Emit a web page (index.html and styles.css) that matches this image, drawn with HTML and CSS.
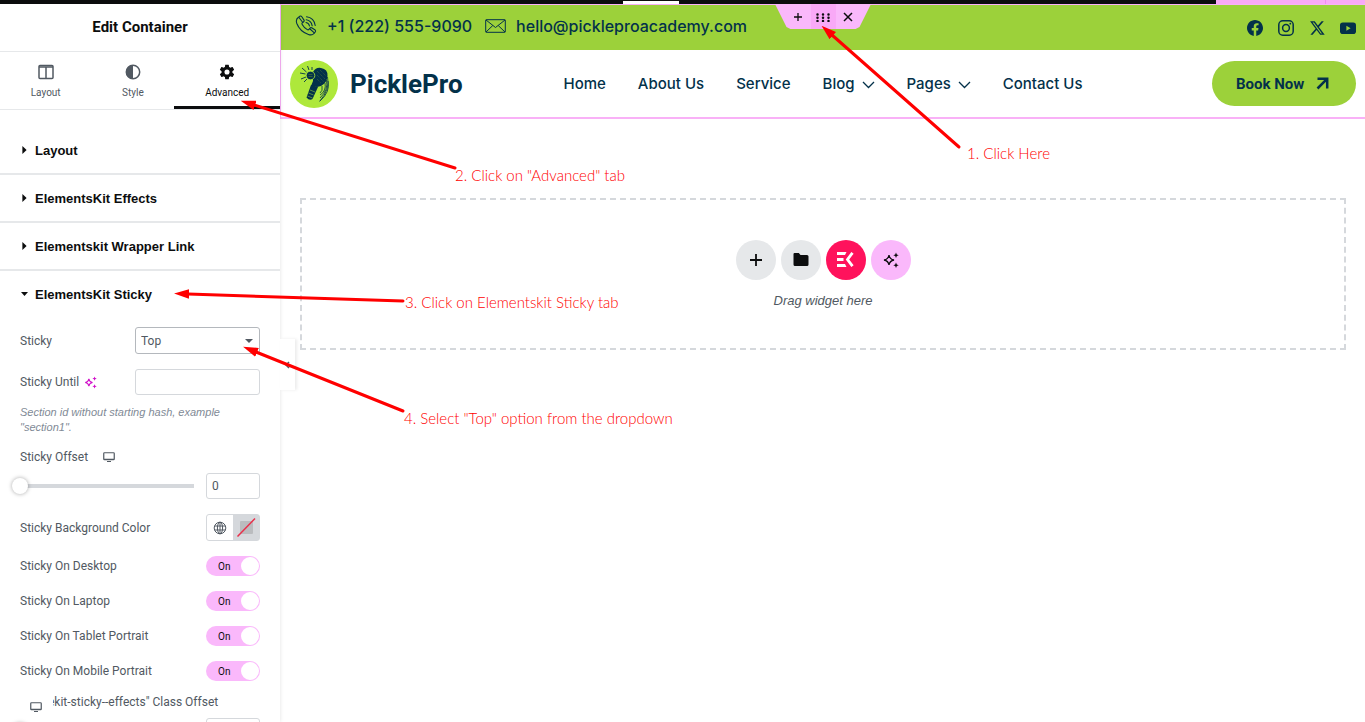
FILE: index.html
```
<!DOCTYPE html>
<html lang="en">
<head>
    <meta charset="UTF-8">
    <meta name="viewport" content="width=device-width, initial-scale=1.0">
    <title>Edit Container</title>
    <link rel="stylesheet" href="styles.css">
</head>
<body>
    <div class="top-strip">
        <span class="strip-tab"></span>
        <span class="strip-publish"></span>
    </div>

    <div class="editor">
        <aside class="panel">
            <h1 class="panel-title">Edit Container</h1>

            <nav class="tabs">
                <button type="button" class="tab">
                    <svg width="16" height="16" viewBox="0 0 16 16" fill="none" stroke="currentColor" stroke-width="1.5"><rect x="1" y="1.5" width="14" height="13" rx="1"/><path d="M1 3h14M8 3v11.500" /></svg>
                    Layout
                </button>
                <button type="button" class="tab">
                    <svg width="16" height="16" viewBox="0 0 16 16"><circle cx="8" cy="8" r="6.700" fill="none" stroke="currentColor" stroke-width="1.500"/><path d="M8 1a7 7 0 0 0 0 14z" fill="currentColor"/></svg>
                    Style
                </button>
                <button type="button" class="tab active">
                    <svg width="16" height="16" viewBox="1 1 22 22" fill="currentColor"><path d="M19.430 12.980c.04-.32.07-.64.07-.98s-.03-.66-.07-.98l2.110-1.650c.19-.15.24-.42.12-.64l-2-3.460c-.12-.22-.39-.3-.61-.22l-2.490 1c-.52-.4-1.080-.73-1.690-.98l-.38-2.650A.488.488 0 0 0 14 2h-4c-.25 0-.46.18-.49.42l-.38 2.650c-.61.25-1.170.59-1.690.98l-2.490-1c-.23-.09-.49 0-.61.22l-2 3.460c-.13.22-.07.49.12.64l2.110 1.650c-.04.32-.07.65-.07.98s.03.66.07.98l-2.110 1.650c-.19.15-.24.42-.12.64l2 3.460c.12.22.39.3.61.22l2.490-1c.52.4 1.080.73 1.690.98l.38 2.650c.03.24.24.42.49.42h4c.25 0 .46-.18.49-.42l.38-2.650c.61-.25 1.170-.59 1.690-.98l2.490 1c.23.09.49 0 .61-.22l2-3.460c.12-.22.07-.49-.12-.64l-2.110-1.650zM12 15.500a3.500 3.500 0 1 1 0-7 3.500 3.500 0 0 1 0 7z"/></svg>
                    Advanced
                </button>
            </nav>

            <div class="sections">
                <button type="button" class="section-head"><span class="caret"></span>Layout</button>
                <button type="button" class="section-head"><span class="caret"></span>ElementsKit Effects</button>
                <button type="button" class="section-head"><span class="caret"></span>Elementskit Wrapper Link</button>
                <button type="button" class="section-head"><span class="caret open"></span>ElementsKit Sticky</button>
            </div>

            <div class="controls">
                <div class="control">
                    <label for="sticky">Sticky</label>
                    <div class="select-wrap">
                        <select id="sticky">
                            <option>None</option>
                            <option selected>Top</option>
                            <option>Bottom</option>
                        </select>
                    </div>
                </div>
                <div class="control">
                    <label for="until">Sticky Until
                        <svg class="ai" width="13" height="13" viewBox="0 0 16 16"><path d="M6 3.500Q6.600 7.400 10.500 8Q6.600 8.600 6 12.500Q5.400 8.600 1.500 8Q5.400 7.400 6 3.500z" fill="none" stroke="currentColor" stroke-width="1.300"/><path d="M13 .5l.8 1.900 1.900.8-1.900.8-.8 1.900-.8-1.900-1.900-.8 1.900-.8zM13 10l.8 1.900 1.900.8-1.900.8-.8 1.900-.8-1.900-1.900-.8 1.900-.8z" fill="currentColor"/></svg>
                    </label>
                    <input type="text" id="until" class="wide-input">
                </div>
                <p class="note">Section id without starting hash, example "section1".</p>

                <div class="control offset-label">
                    <label for="offset">Sticky Offset</label>
                    <svg class="device" width="12" height="10" viewBox="0 0 12 10"><rect x=".75" y=".75" width="10.500" height="7" rx=".7" fill="none" stroke="currentColor" stroke-width="1.200"/><path d="M1 6.700h10v1.200H1zM4 9h4v1H4z" fill="currentColor"/></svg>
                </div>
                <div class="control slider-row">
                    <input type="range" id="offset" class="slider" min="0" max="100" value="0">
                    <input type="text" class="num-input" value="0" aria-label="Offset value">
                </div>

                <div class="control color-row">
                    <span>Sticky Background Color</span>
                    <div class="color-picker">
                        <button type="button" aria-label="Global color">
                            <svg width="14" height="14" viewBox="0 0 14 14" fill="none" stroke="currentColor"><circle cx="7" cy="7" r="5.800"/><ellipse cx="7" cy="7" rx="2.600" ry="5.800"/><path d="M1.700 5h10.600M1.700 9h10.600M7 1v12"/></svg>
                        </button>
                        <button type="button" class="swatch" aria-label="Pick color">
                            <svg width="26" height="25" viewBox="0 0 26 25"><rect x="7" y="6" width="13" height="13" rx="1" fill="#babcbf"/><path d="M4.500 21.500L22 3.500" stroke="#e9304b" stroke-width="1.500"/></svg>
                        </button>
                    </div>
                </div>

                <label class="control switch-row">Sticky On Desktop
                    <input type="checkbox" class="switch" checked><span class="switch-track">On</span>
                </label>
                <label class="control switch-row">Sticky On Laptop
                    <input type="checkbox" class="switch" checked><span class="switch-track">On</span>
                </label>
                <label class="control switch-row">Sticky On Tablet Portrait
                    <input type="checkbox" class="switch" checked><span class="switch-track">On</span>
                </label>
                <label class="control switch-row">Sticky On Mobile Portrait
                    <input type="checkbox" class="switch" checked><span class="switch-track">On</span>
                </label>

                <div class="class-offset">
                    <label for="classOffset">".ekit-sticky--effects" Class Offset</label>
                    <span class="device-cover">
                        <svg class="device" width="12" height="10" viewBox="0 0 12 10"><rect x=".75" y=".75" width="10.500" height="7" rx=".7" fill="none" stroke="currentColor" stroke-width="1.200"/><path d="M1 6.700h10v1.200H1zM4 9h4v1H4z" fill="currentColor"/></svg>
                    </span>
                </div>
                <div class="control slider-row">
                    <input type="range" class="slider" min="0" max="100" value="0" aria-label="Class offset">
                    <input type="text" id="classOffset" class="num-input">
                </div>
            </div>

            <button type="button" class="collapse" aria-label="Hide panel">
                <svg width="5" height="8" viewBox="0 0 5 8" fill="none" stroke="#515962" stroke-width="1.500"><path d="M4 1L1 4l3 3"/></svg>
            </button>
        </aside>

        <main class="preview">
            <header class="site-header">
                <div class="info-bar">
                    <a href="#" class="contact phone">
                        <svg width="22" height="22" viewBox="0 0 22 22" fill="none" stroke="currentColor" stroke-width="1.100" stroke-linejoin="round" stroke-linecap="round"><path d="M3.500 2.200L5 1.100Q6.200.8 7 2l2 3.100q.5 1-.4 1.700L7.200 7.900q-.5.600 0 1.500 1.900 3.300 5.100 5.200.8.500 1.500-.1l1.200-1.400q.7-.9 1.700-.3l3.100 2q1.200.8.500 2l-1.400 1.700q-1.800 2.200-5.500.9Q4.900 16.500 1.700 8.200.5 4.200 3.500 2.200z"/><path d="M4 2.500l3.800 5M15 14l4.300 3.800M11 7.500q2.900.6 3.500 3.500M11.200 4.800q4.900.6 6 6M11.500 1.800q7.500.8 8.700 8.700"/></svg>
                        +1 (222) 555-9090
                    </a>
                    <a href="#" class="contact">
                        <svg width="21" height="14" viewBox="0 0 21 14" fill="none" stroke="currentColor" stroke-width="1"><rect x=".7" y=".7" width="19.600" height="12.600" rx=".5"/><path d="M1 1l9.500 7.500L20 1M1 13l6.800-6.500M20 13l-6.800-6.500"/></svg>
                        hello@pickleproacademy.com
                    </a>
                    <div class="socials">
                        <a href="#" aria-label="Facebook"><svg width="16" height="16" viewBox="0 0 16 16" fill="currentColor"><path d="M16 8.050C16 3.600 12.420 0 8 0S0 3.600 0 8.050c0 4.020 2.930 7.350 6.750 7.950v-5.620H4.720V8.050h2.030V6.280c0-2.020 1.190-3.130 3.020-3.130.88 0 1.790.16 1.790.16v1.980h-1.010c-.99 0-1.300.62-1.300 1.260v1.500h2.220l-.36 2.330H9.250V16C13.070 15.400 16 12.070 16 8.050z"/></svg></a>
                        <a href="#" aria-label="Instagram"><svg width="16" height="16" viewBox="0 0 16 16" fill="none" stroke="currentColor" stroke-width="1.500"><rect x=".8" y=".8" width="14.400" height="14.400" rx="4"/><circle cx="8" cy="8" r="3.400"/><circle cx="12.300" cy="3.700" r=".9" fill="currentColor" stroke="none"/></svg></a>
                        <a href="#" aria-label="X"><svg width="16" height="16" viewBox="0 0 16 16" fill="currentColor"><path d="M12.600 1.200h2.200l-4.900 5.700 5.800 7.900h-4.500L7.600 10l-4 4.800H1.400l5.200-6.100L1.100 1.200h4.600l3.200 4.400zm-.8 12.200H13L4.900 2.500H3.600z"/></svg></a>
                        <a href="#" aria-label="YouTube"><svg width="16" height="16" viewBox="0 0 16 16"><rect y="2.500" width="16" height="11.500" rx="2.800" fill="currentColor"/><path d="M6.400 5.700v5l4.200-2.500z" fill="#9cd13a"/></svg></a>
                    </div>
                </div>

                <div class="nav-bar">
                    <a href="#" class="logo">
                        <svg width="48" height="48" viewBox="0 0 48 48"><circle cx="24" cy="24" r="24" fill="#aee83b"/><g fill="#03314a"><path d="M23 12Q26 7 31 8q7 1 6.500 8Q37 23 31 26l-4 1-6-1 2-5z"/><path d="M21 25l7 2-5.500 12q-3 2-6-1.500z"/></g><g fill="none" stroke="#03314a" stroke-width=".9"><path d="M15.500 14L10 13M16 17l-5 2M16.500 12L12 8M19 10l-1.500-4M22 10V7M17 19l-3 3"/><path stroke-width=".8" d="M37.500 17q3 12-8 24.500M36.500 20q2 10-6.500 18M35 23q1.500 8-5 12M38 21q2.500 11-8 20M32 26q1 5-2 7"/></g><g stroke="#aee83b" stroke-width=".5" fill="none"><circle cx="20.500" cy="15.500" r="4.300" fill="#03314a" stroke-width=".8"/><path d="M18.500 14.500h4M18.500 16.500h4" stroke="#63902f"/><path d="M27 11l8 8M30 10l6 6M27 15l7 7M27 19l4 4" stroke="#63902f" stroke-dasharray="1 1"/><path d="M20 30l5 2M18.500 33l5 2M17.500 36l5 2"/></g></svg>
                        <span>PicklePro</span>
                    </a>
                    <nav class="menu">
                        <a href="#">Home</a>
                        <a href="#">About Us</a>
                        <a href="#">Service</a>
                        <a href="#">Blog <svg class="chev" width="13" height="8" viewBox="0 0 13 8"><path d="M1 1l5.500 5.500L12 1"/></svg></a>
                        <a href="#">Pages <svg class="chev" width="13" height="8" viewBox="0 0 13 8"><path d="M1 1l5.500 5.500L12 1"/></svg></a>
                        <a href="#">Contact Us</a>
                    </nav>
                    <a href="#" class="book">Book Now
                        <svg width="13" height="13" viewBox="0 0 13 13" fill="none" stroke="currentColor" stroke-width="2.500"><path d="M1.500 1.800h9.700v9.700M10.800 2.200L1.500 11.500"/></svg>
                    </a>
                </div>

                <div class="handle">
                    <button type="button" aria-label="Add container"><svg width="10" height="10" viewBox="0 0 10 10" stroke="currentColor" stroke-width="1.300"><path d="M5 1v8M1 5h8"/></svg></button>
                    <button type="button" class="drag" aria-label="Edit container"><svg width="14" height="9" viewBox="0 0 14 9" stroke="currentColor" stroke-width="2.500" stroke-linecap="round"><path d="M1.500 1.500h.01M7 1.500h.01M12.500 1.500h.01M1.500 4.700h.01M7 4.700h.01M12.500 4.700h.01M1.500 7.900h.01M7 7.900h.01M12.500 7.900h.01"/></svg></button>
                    <button type="button" aria-label="Delete container"><svg width="10" height="10" viewBox="0 0 10 10" stroke="currentColor" stroke-width="1.500"><path d="M1 1l8 8M9 1L1 9"/></svg></button>
                </div>
            </header>

            <section class="drop-area">
                <div class="drop-buttons">
                    <button type="button" aria-label="Add element"><svg width="14" height="14" viewBox="0 0 14 14" stroke="currentColor" stroke-width="1.800"><path d="M7 1v12M1 7h12"/></svg></button>
                    <button type="button" aria-label="Template library"><svg width="16" height="14" viewBox="0 0 16 14" fill="currentColor"><path d="M1.500 0h4.300l1.700 2h6.500q1.500 0 1.500 1.500v8q0 1.500-1.500 1.500H2Q.5 13 .5 11.500V1.200Q.5 0 1.500 0z"/></svg></button>
                    <button type="button" class="kit" aria-label="ElementsKit library"><svg width="17" height="15" viewBox="0 0 17 15"><path d="M0 0h9.500L8 3H0zM0 6h6.500v3H0zM0 12h8l1.500 3H0z" fill="currentColor"/><path d="M15.500.8L10.500 7.500l5 6.700" fill="none" stroke="currentColor" stroke-width="2.800"/></svg></button>
                    <button type="button" class="spark" aria-label="Build with AI"><svg width="16" height="16" viewBox="0 0 16 16"><path d="M6 3Q6.700 7.300 11 8Q6.700 8.700 6 13Q5.300 8.700 1 8Q5.300 7.300 6 3z" fill="none" stroke="currentColor" stroke-width="1.300"/><path d="M13 .5l.8 1.900 1.900.8-1.900.8-.8 1.900-.8-1.900-1.900-.8 1.900-.8zM13 10.500l.8 1.900 1.900.8-1.900.8-.8 1.900-.8-1.900-1.900-.8 1.900-.8z" fill="currentColor"/></svg></button>
                </div>
                <p>Drag widget here</p>
            </section>
        </main>
    </div>

    <!-- tutorial arrows and steps -->
    <svg class="arrows" width="1000" height="440" viewBox="0 0 1000 440">
        <defs>
            <marker id="head" viewBox="0 0 14 9" refX="1" refY="4.500" markerWidth="15" markerHeight="10" markerUnits="userSpaceOnUse" orient="auto"><path d="M0 0l14 4.500L0 9z" fill="#f00"/></marker>
        </defs>
        <g stroke="#f00" stroke-width="3" stroke-linecap="round">
            <line x1="959" y1="147" x2="832" y2="35" marker-end="url(#head)"/>
            <line x1="455" y1="168" x2="254" y2="105" marker-end="url(#head)"/>
            <line x1="403" y1="301" x2="188" y2="294" marker-end="url(#head)"/>
            <line x1="403" y1="411" x2="256" y2="352" marker-end="url(#head)"/>
        </g>
    </svg>
    <p class="step step-1">1. Click Here</p>
    <p class="step step-2">2. Click on "Advanced" tab</p>
    <p class="step step-3">3. Click on Elementskit Sticky tab</p>
    <p class="step step-4">4. Select "Top" option from the dropdown</p>
</body>
</html>
```
FILE: styles.css
```
* {
    box-sizing: border-box;
}
body {
    margin: 0;
    height: 100vh;
    overflow: hidden;
    position: relative;
    display: flex;
    flex-direction: column;
    background: #fff;
    font-family: Roboto, sans-serif;
}
button {
    border: none;
    background: none;
    padding: 0;
    font-family: inherit;
    color: inherit;
    cursor: pointer;
}
a {
    color: inherit;
    text-decoration: none;
}
svg {
    flex-shrink: 0;
}

/* top strip */
.top-strip {
    flex: none;
    height: 4px;
    background: #0c0d0e;
    display: flex;
    justify-content: space-between;
    align-items: flex-end;
}
.strip-tab {
    width: 56px;
    height: 3px;
    margin-left: 623px;
    background: #fff;
}
.strip-publish {
    width: 149px;
    height: 4px;
    background: linear-gradient(90deg, #f9a9f7 109px, #f08cee 109px, #f08cee 110px, #f9a9f7 110px);
}
.editor {
    flex: 1;
    min-height: 0;
    display: flex;
}

/* panel */
.panel {
    position: relative;
    z-index: 1;
    flex: none;
    width: 280px;
    color: #515962;
    font-size: 12px;
    background: #fff;
    box-shadow: 0 0 4px rgba(0, 0, 0, 0.12);
}
.panel-title {
    margin: 0;
    height: 48px;
    line-height: 46px;
    text-align: center;
    font-size: 15px;
    font-weight: 700;
    color: #0c0d0e;
    border-bottom: 1px solid #e6e8ea;
}
.tabs {
    display: flex;
    height: 58px;
    border-bottom: 1px solid #e6e8ea;
}
.tab {
    flex: 1 1 auto;
    display: flex;
    flex-direction: column;
    align-items: center;
    gap: 7px;
    padding-top: 12px;
    font-size: 10px;
    color: #515962;
    border-bottom: 3px solid transparent;
}
.tab.active {
    color: #0c0d0e;
    border-bottom-color: #0c0d0e;
}
.sections {
    padding-top: 17px;
}
.section-head {
    display: flex;
    align-items: center;
    gap: 7px;
    width: 100%;
    height: 48px;
    padding-left: 21px;
    font-family: "Liberation Sans", Arial, sans-serif;
    font-size: 13px;
    font-weight: 700;
    color: #0c0d0e;
    border-bottom: 2px solid #e6e8ea;
}
.section-head:last-child {
    border-bottom-color: transparent;
}
.caret {
    width: 7px;
    height: 8px;
    background: #0c0d0e;
    clip-path: polygon(20% 0, 80% 50%, 20% 100%);
}
.caret.open {
    clip-path: polygon(0 25%, 100% 25%, 50% 75%);
}
.controls {
    padding: 8px 20px 0;
}
.control {
    display: flex;
    align-items: center;
    justify-content: space-between;
}
.control + .control {
    margin-top: 15px;
}
.select-wrap {
    position: relative;
    width: 125px;
}
.select-wrap::after {
    content: "";
    position: absolute;
    right: 7px;
    top: 12px;
    border: 4px solid transparent;
    border-top-color: #515962;
    border-bottom: none;
    pointer-events: none;
}
select, .wide-input, .num-input {
    height: 26px;
    padding: 0 5px;
    font-family: inherit;
    font-size: 12px;
    color: #515962;
    background: #fff;
    border: 1px solid #d5d8dc;
    border-radius: 3px;
}
select {
    appearance: none;
    width: 100%;
    height: 27px;
    display: block;
    border-color: #b4b8bd;
}
.wide-input {
    width: 125px;
}
.num-input {
    width: 54px;
}
.ai {
    margin-left: 2px;
    vertical-align: -3px;
    color: #d010c8;
}
.note {
    margin: 10px 0 14px;
    font-family: "Liberation Sans", Arial, sans-serif;
    font-size: 11px;
    font-style: italic;
    line-height: 15px;
    color: #818a96;
}
.offset-label {
    justify-content: flex-start;
    gap: 15px;
    height: 16px;
}
.control.slider-row {
    margin-top: 8px;
}
.slider {
    appearance: none;
    width: 182px;
    height: 26px;
    margin: 0 0 0 -8px;
    background: linear-gradient(#d5d8dc, #d5d8dc) 8px 11px / 174px 4px no-repeat;
}
.slider::-webkit-slider-thumb {
    appearance: none;
    width: 16px;
    height: 16px;
    border-radius: 50%;
    background: #fff;
    box-shadow: 0 0 4px rgba(0, 0, 0, 0.35);
}
.color-picker {
    display: flex;
    width: 54px;
    height: 27px;
    border: 1px solid #d5d8dc;
    border-radius: 3px;
}
.color-picker button {
    flex: 1;
    display: flex;
    align-items: center;
    justify-content: center;
}
.color-picker .swatch {
    background: #d5d8dc;
}
.switch-row {
    position: relative;
    height: 20px;
}
.switch {
    position: absolute;
    right: 0;
    opacity: 0;
}
.switch-track {
    display: flex;
    align-items: center;
    justify-content: space-between;
    width: 54px;
    height: 20px;
    padding: 0 1px 0 12px;
    border-radius: 10px;
    font-size: 10px;
    color: #0c0d0e;
    background: #fab8fb;
}
.switch-track::after {
    content: "";
    width: 18px;
    height: 18px;
    border-radius: 50%;
    background: #fff;
}
.class-offset {
    position: relative;
    margin-top: 13px;
    padding-left: 21px;
    line-height: 16px;
    white-space: nowrap;
}
.device-cover {
    position: absolute;
    left: 0;
    top: 0;
    width: 33px;
    height: 24px;
    padding: 6px 0 0 10px;
    background: #fff;
}
.collapse {
    position: absolute;
    left: 280px;
    top: 335px;
    width: 15px;
    height: 51px;
    background: #fff;
    box-shadow: 2px 0 3px rgba(0, 0, 0, 0.08);
}

/* site preview */
.preview {
    flex: 1;
    min-width: 0;
    color: #03314a;
    font-family: Inter, sans-serif;
}
.site-header {
    position: relative;
    border: 1px solid #f9b1f7;
    border-width: 1px 0 2px 1px;
}
.info-bar {
    display: flex;
    align-items: center;
    height: 45px;
    padding: 0 9px 3px 14px;
    background: #9cd13a;
}
.contact {
    display: flex;
    align-items: center;
    gap: 10px;
    margin-right: 13px;
    font-size: 16px;
    font-weight: 500;
}
.socials {
    display: flex;
    gap: 15px;
    margin-left: auto;
    padding-top: 3px;
}
.socials svg {
    display: block;
}
.nav-bar {
    display: grid;
    grid-template-columns: 1fr auto 1fr;
    align-items: center;
    height: 67px;
    padding: 0 9px;
}
.logo {
    display: flex;
    align-items: center;
    gap: 12px;
    font-family: Roboto, sans-serif;
    font-size: 26px;
    font-weight: 700;
}
.menu {
    display: flex;
    gap: 32px;
    font-size: 15px;
    font-weight: 500;
}
.chev {
    margin-left: 3px;
    fill: none;
    stroke: currentColor;
    stroke-width: 1.3;
}
.book {
    justify-self: end;
    display: flex;
    align-items: center;
    gap: 12px;
    width: 144px;
    height: 45px;
    padding-left: 24px;
    border-radius: 23px;
    font-family: Roboto, sans-serif;
    font-size: 15px;
    font-weight: 700;
    background: #9cd13a;
}
.handle {
    position: absolute;
    top: -1px;
    left: 50%;
    display: flex;
    justify-content: center;
    width: 96px;
    height: 25px;
    margin-left: -48px;
    color: #0c0d0e;
    background: #fab8fb;
    clip-path: polygon(0 0, 100% 0, 88% 92%, 84% 100%, 16% 100%, 12% 92%);
}
.handle button {
    width: 25px;
}
.handle .drag {
    background: #f9a9f7;
}
.drop-area {
    display: flex;
    flex-direction: column;
    align-items: center;
    justify-content: center;
    gap: 13px;
    height: 152px;
    margin: 79px 19px 0 20px;
    border: 2px dashed #d5d8dc;
}
.drop-area p {
    margin: 0;
    font-family: "Liberation Sans", Arial, sans-serif;
    font-size: 13px;
    font-style: italic;
    line-height: 16px;
    color: #515962;
}
.drop-buttons {
    display: flex;
    gap: 5px;
}
.drop-buttons button {
    display: flex;
    align-items: center;
    justify-content: center;
    width: 40px;
    height: 40px;
    border-radius: 50%;
    color: #0c0d0e;
    background: #e6e8ea;
}
.drop-buttons .kit {
    color: #fff;
    background: #ff125c;
}
.drop-buttons .spark {
    background: #fab8fb;
}

/* tutorial overlay */
.arrows {
    position: absolute;
    left: 0;
    top: 0;
    z-index: 2;
    pointer-events: none;
}
.step {
    position: absolute;
    z-index: 2;
    margin: 0;
    font-family: Lato, sans-serif;
    font-size: 15px;
    font-weight: 300;
    line-height: 20px;
    color: #f00;
    white-space: nowrap;
}
.step-1 {
    left: 967px;
    top: 143px;
}
.step-2 {
    left: 455px;
    top: 165px;
}
.step-3 {
    left: 405px;
    top: 292px;
}
.step-4 {
    left: 404px;
    top: 408px;
}
```
